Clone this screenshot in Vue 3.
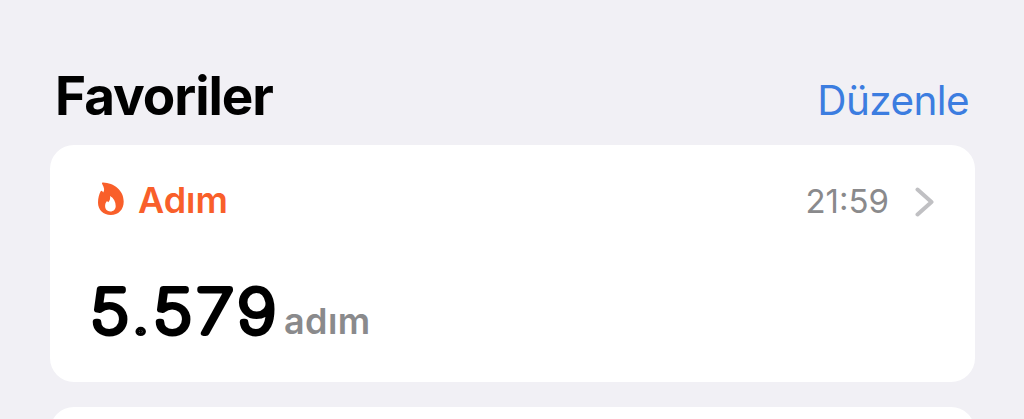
<template>
  <main class="summary">
    <header class="section-head">
      <h1>Favoriler</h1>
      <a class="edit">Düzenle</a>
    </header>

    <section class="card">
      <div class="card-top">
        <svg class="flame" viewBox="0 0 28 34">
          <path
            fill-rule="evenodd"
            d="M6 0.600C17 1 26.700 8.500 26.700 19.500C26.700 27.800 21.300 33 13.800 33C6.300 33 1 28 1 20.500C1 16 2.200 12 3.700 9.200C4.300 8.300 5.200 8.500 5.500 9.500L6.200 10.500C7.800 8.500 7.300 5.500 5.300 2.200C4.700 1.300 5 0.600 6 0.600ZM13 14C13.600 16.500 12.800 18.600 11.200 20.200L10 18.900C8.700 20.400 8.100 22 8.100 24C8.100 27.400 10.300 29.400 13.300 29.400C16.400 29.400 18.700 27.200 18.700 23.900C18.700 19.800 16.800 16 13 14Z"
          />
        </svg>
        <span class="name">{{ card.name }}</span>
        <time>{{ card.time }}</time>
        <svg class="chevron" viewBox="0 0 20 30">
          <path d="M2.500 2.500L16.500 15L2.500 27.500" />
        </svg>
      </div>
      <div class="reading">
        <!-- stroked text gives the digits their rounded ends -->
        <svg class="value" viewBox="0 0 186 64">
          <text x="-0.500" y="56.500" textLength="190" lengthAdjust="spacingAndGlyphs">{{ card.value }}</text>
        </svg>
        <span class="unit">{{ card.unit }}</span>
      </div>
    </section>

    <section class="card next"></section>
  </main>
</template>

<script setup>
const card = { name: 'Adım', time: '21:59', value: '5.579', unit: 'adım' };
</script>

<style>
body { margin: 0; background: #f1f0f5; }
</style>

<style scoped>
.summary {
  height: 419px;
  overflow: hidden;
  box-sizing: border-box;
  padding: 64px 49px 0 50px;
  background: #f1f0f5;
  font-family: Inter, "Liberation Sans", sans-serif;
}

.section-head {
  display: flex;
  justify-content: space-between;
  align-items: baseline;
  height: 81px;
  padding: 0 6px 0 5px;
  box-sizing: border-box;
}
h1 { margin: 0; font-size: 53px; line-height: 64px; font-weight: 700; letter-spacing: -1.05px; color: #000; }
.edit { font-size: 40.5px; letter-spacing: -0.6px; color: #3c7de0; }

.card { height: 237px; box-sizing: border-box; padding: 32px 40px 0 41px; border-radius: 24px; background: #fff; }
.card.next { margin-top: 25px; }

.card-top { display: flex; align-items: center; height: 45px; }
.flame { width: 28px; height: 34px; margin: -1px 0 0 6px; fill: #f95f2a; }
.name { margin: 0 0 0 13px; font-size: 36px; font-weight: 600; letter-spacing: 0; color: #f95f2a; }
time { margin: 3px 0 0 auto; font-size: 33px; color: #8a8a8c; }
.chevron { width: 20px; height: 30px; margin: 4px 0 0 26px; fill: none; stroke: #c0c0c3; stroke-width: 4; stroke-linecap: round; stroke-linejoin: round; }

.reading { display: flex; align-items: flex-end; height: 64px; margin-top: 54px; }
.value { width: 186px; height: 64px; overflow: visible; }
.value text {
  font-size: 60.5px;
  font-weight: 100;
  letter-spacing: 4px;
  fill: #000;
  stroke: #000;
  stroke-width: 6.2;
  stroke-linejoin: round;
}
.unit { margin: 0 0 -3px 7px; font-size: 36px; line-height: 44px; font-weight: 600; letter-spacing: 0.4px; color: #8a8a8c; }
</style>
